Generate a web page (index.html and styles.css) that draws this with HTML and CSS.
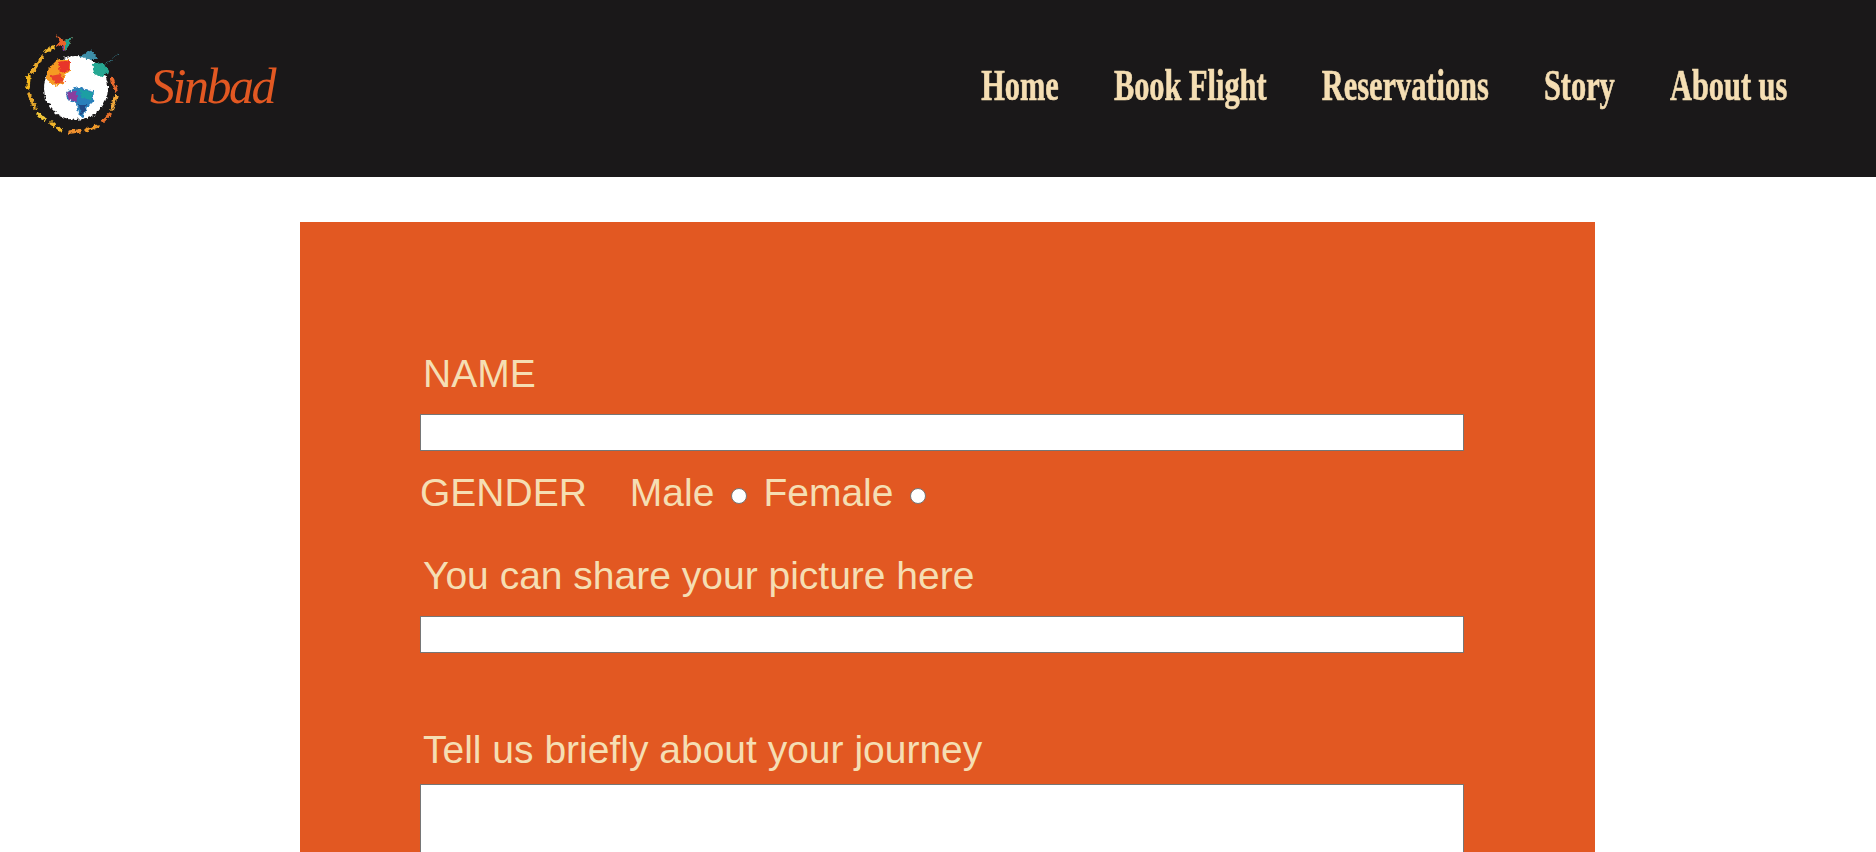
FILE: index.html
```html
<!DOCTYPE html>
<html lang="en">
<head>
    <meta charset="UTF-8">
    <title>Sinbad</title>
    <link rel="stylesheet" href="styles.css">
</head>
<body>

    <header class="topbar">
        <div class="brand">
            <svg class="logo" width="110" height="110" viewBox="0 0 110 110">
                <defs>
                    <filter id="rough" x="-20%" y="-20%" width="140%" height="140%">
                        <feTurbulence type="fractalNoise" baseFrequency="0.3" numOctaves="2" seed="4"/>
                        <feDisplacementMap in="SourceGraphic" scale="5" xChannelSelector="R" yChannelSelector="G"/>
                        <feGaussianBlur stdDeviation="0.5"/>
                    </filter>
                </defs>
                <g filter="url(#rough)">
                    <circle cx="56" cy="62" r="32" fill="#fff"/>
                    <!-- ring -->
                    <g fill="none" stroke-width="3.4" stroke-linecap="round">
                        <path d="M33 21 L26 26" stroke="#f3b92f"/>
                        <path d="M22 31 L12 46" stroke="#e9a92c"/>
                        <path d="M9 50 L8 62" stroke="#f5b81f"/>
                        <path d="M9 68 L15 82" stroke="#e5a62b"/>
                        <path d="M18 88 L26 94" stroke="#efc437" stroke-dasharray="3 3"/>
                        <path d="M31 97 L41 104" stroke="#f0b429" stroke-dasharray="4 4"/>
                        <path d="M50 106 L60 105" stroke="#ee8f2d"/>
                        <path d="M66 104 L78 100" stroke="#f09a2a"/>
                        <path d="M83 95 L90 88" stroke="#e7702c"/>
                        <path d="M92 82 L96 70" stroke="#f2a93a"/>
                        <path d="M96 64 L92 52" stroke="#ea6a2e" stroke-dasharray="4 3"/>
                    </g>
                    <!-- north america -->
                    <path d="M27 44 L38 33 L50 33 L50 45 L44 50 L44 58 L35 60 L27 54 Z" fill="#f59a22"/>
                    <path d="M38 36 L50 34 L49 45 L40 47 Z" fill="#e8342b"/>
                    <path d="M30 50 L41 48 L45 56 L35 58 Z" fill="#e9432a"/>
                    <!-- south america -->
                    <path d="M46 66 L58 61 L74 65 L73 76 L67 82 L63 92 L58 88 L56 78 L47 73 Z" fill="#2a7fbb"/>
                    <path d="M46 66 L56 65 L58 76 L49 74 Z" fill="#8a3e9e"/>
                    <path d="M60 64 L73 66 L71 74 L62 72 Z" fill="#1e9fa3"/>
                    <path d="M58 78 L67 78 L63 90 Z" fill="#224a86"/>
                    <!-- top right land -->
                    <path d="M72 38 L84 37 L89 46 L81 52 L74 47 Z" fill="#27a893"/>
                    <path d="M60 30 L72 24 L78 33 L66 33 Z" fill="#3d8ea8"/>
                    <path d="M86 38 L98 29" stroke="#3b8a9c" stroke-width="0.8" fill="none"/>
                    <!-- plane -->
                    <path d="M36 9 L45 15 L52 10 L49 19 L45 25 L43 19 L35 21 L40 15 Z" fill="#e8642c"/>
                    <path d="M45 15 L52 10 L49 19 L45 25 Z" fill="#1fa08c"/>
                    <path d="M43 19 L45 25 L42 23 Z" fill="#7a3fa0"/>
                </g>
            </svg>
            <span class="brand-name">Sinbad</span>
        </div>
        <nav class="menu">
            <a href="#">Home</a>
            <a href="#">Book Flight</a>
            <a href="#">Reservations</a>
            <a href="#">Story</a>
            <a href="#">About us</a>
        </nav>
    </header>

    <main class="panel">
        <form>
            <label class="field-label" for="name">NAME</label>
            <input class="field" type="text" id="name">

            <div class="gender">
                <span class="gender-title">GENDER</span>
                <label for="male">Male</label>
                <input class="radio" type="radio" id="male" name="gender">
                <label for="female">Female</label>
                <input class="radio" type="radio" id="female" name="gender">
            </div>

            <label class="field-label" for="picture">You can share your picture here</label>
            <input class="field" type="text" id="picture">

            <label class="field-label journey" for="journey">Tell us briefly about your journey</label>
            <textarea class="field story" id="journey"></textarea>
        </form>
    </main>

</body>
</html>
```

FILE: styles.css
```css
html, body { height: 852px; overflow: hidden; }
body { margin: 0; background-color: white; font-family: "Liberation Sans", Arial, sans-serif; }

.topbar { height: 177px; background-color: #1a1819; display: flex; align-items: center; justify-content: space-between; }
.brand { display: flex; align-items: center; padding-left: 20px; }
.logo { display: block; margin-bottom: 15px; }
.brand-name { margin: 0 0 6px 20px; font-family: "Liberation Serif", serif; font-style: italic; font-size: 50px; letter-spacing: -2.5px; color: #e25822; }

.menu { display: flex; gap: 80px; margin: 0 89px 6px 0; transform: scaleX(0.69); transform-origin: right center; }
.menu a { font-family: "Liberation Serif", serif; font-weight: bold; font-size: 44px; color: wheat; text-decoration: none; -webkit-text-stroke: 0.7px wheat; }

.panel { width: 1295px; margin: 45px 0 0 300px; padding: 130px 131px 60px 120px; box-sizing: border-box; background-color: #e25822; color: wheat; }

.field-label { display: block; margin-left: 3px; font-size: 39px; }
.field-label.journey { margin-top: 75px; }
.field { display: block; width: 100%; height: 37px; box-sizing: border-box; margin: 18px 0 0 0; padding: 0; border: 1px solid #767676; background-color: white; }
.story { height: 300px; margin-top: 12px; resize: none; }

.gender { display: flex; align-items: center; font-size: 39px; margin: 20px 0 39px 0; }
.gender-title { margin-right: 43px; }
.radio { appearance: none; width: 16px; height: 16px; margin: 6px 16px 0 17px; border: 1px solid #767676; border-radius: 50%; background-color: white; }
```
